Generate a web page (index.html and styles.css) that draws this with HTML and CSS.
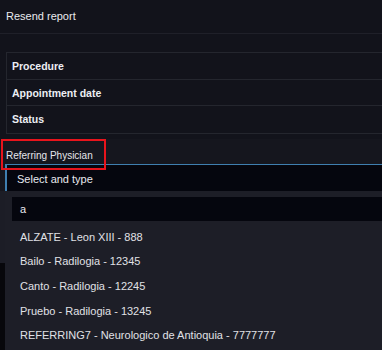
FILE: index.html
```html
<!DOCTYPE html>
<html lang="en">
<head>
  <meta charset="UTF-8">
  <title>Resend report</title>
  <link rel="stylesheet" href="styles.css">
</head>
<body>

  <!-- Header -->
  <div class="header">Resend report</div>

  <div class="page">
    <!-- Study fields -->
    <div class="info-table">
      <div class="info-row">Procedure</div>
      <div class="info-row">Appointment date</div>
      <div class="info-row">Status</div>
    </div>

    <!-- Referring physician -->
    <div class="field">
      <div class="field-label">Referring Physician</div>
      <div class="select">Select and type</div>
    </div>
  </div>

  <!-- Dropdown -->
  <div class="shade">
    <div class="dropdown">
      <div class="search">a</div>
      <ul class="options">
        <li>ALZATE - Leon XIII - 888</li>
        <li>Bailo - Radilogia - 12345</li>
        <li>Canto - Radilogia - 12245</li>
        <li>Pruebo - Radilogia - 13245</li>
        <li>REFERRING7 - Neurologico de Antioquia - 7777777</li>
      </ul>
    </div>
  </div>

</body>
</html>
```

FILE: styles.css
```css
* {
  box-sizing: border-box;
}

html, body {
  height: 350px;
  overflow: hidden;
}

body {
  margin: 0;
  font-family: 'Liberation Sans', Arial, sans-serif;
  background: #12131b;
  color: #e4e5ea;
  font-size: 11px;
}

.header {
  height: 34px;
  padding: 10px 6px 0;
  font-size: 11px;
  color: #e9eaee;
  border-bottom: 1px solid #1f2029;
}

.page {
  padding: 18px 0 0 6px;
}

.info-table {
  border: 1px solid #24262e;
  border-right: none;
  background: #12131b;
}

.info-row {
  height: 26.5px;
  line-height: 26px;
  padding-left: 5px;
  font-size: 10.5px;
  font-weight: bold;
  color: #eceef3;
  border-bottom: 1px solid #24262e;
}

.info-row:last-child {
  border-bottom: none;
}

.field {
  margin-top: 5px;
  background: #15161e;
  margin-left: -6px;
}

.field-label {
  position: relative;
  height: 25px;
  padding: 11px 0 0 6px;
  font-size: 10px;
  color: #e6e7ec;
}

/* red annotation box */
.field-label::after {
  content: "";
  position: absolute;
  left: 1px;
  top: 0;
  width: 101px;
  height: 27px;
  border: 2px solid #e8141c;
  z-index: 2;
}

.select {
  margin-left: 5px;
  height: 27px;
  padding: 8px 0 0 10px;
  background: #05060e;
  border-top: 1px solid #3f7fb0;
  border-left: 2px solid #3f7fb0;
  color: #e8e9ee;
}

.shade {
  background: #1c1d26;
  height: 160px;
  position: relative;
}

.shade::before {
  content: "";
  position: absolute;
  left: 0;
  top: 72px;
  width: 6px;
  height: 90px;
  background: #07070b;
}

.dropdown {
  margin-left: 5px;
  padding: 6px 0 0 7px;
  background: #1d1e27;
  height: 100%;
  position: relative;
}

.search {
  height: 24px;
  padding: 6px 0 0 8px;
  background: #05060e;
  color: #e8e9ee;
  font-size: 11px;
}

.options {
  list-style: none;
  margin: 4px 0 0;
  padding: 0;
}

.options li {
  height: 24.7px;
  line-height: 24px;
  padding-left: 8px;
  color: #e0e1e6;
  font-size: 11px;
}
```
